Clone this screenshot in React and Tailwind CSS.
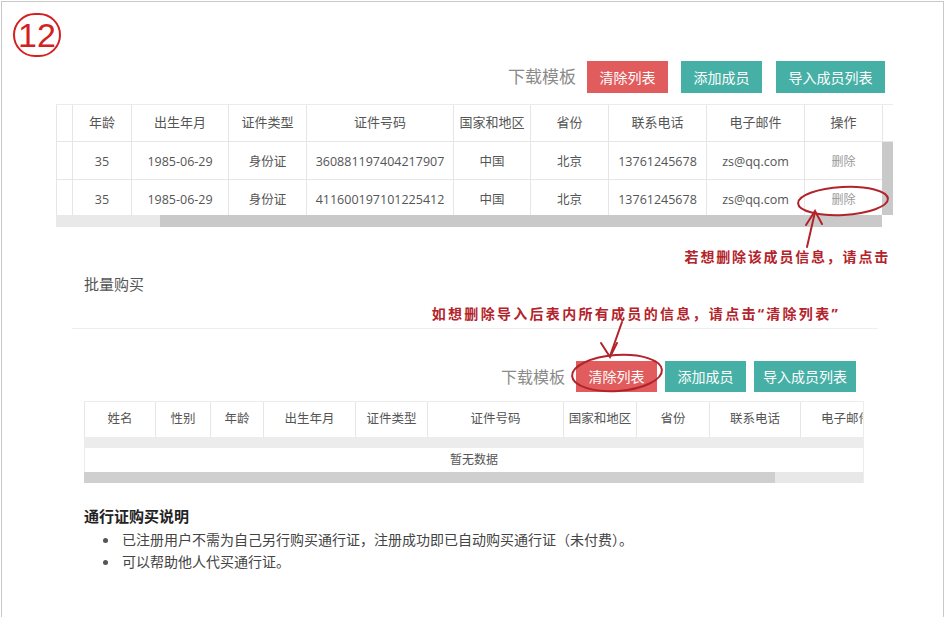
import React from "react";

const font = "font-['Open_Sans','Noto_Sans_CJK_SC',sans-serif]";

const topCols = [
  { w: 16, h: "" },
  { w: 59, h: "年龄" },
  { w: 97, h: "出生年月" },
  { w: 78, h: "证件类型" },
  { w: 147, h: "证件号码" },
  { w: 77, h: "国家和地区" },
  { w: 78, h: "省份" },
  { w: 98, h: "联系电话" },
  { w: 98, h: "电子邮件" },
  { w: 78, h: "操作" },
];

const topRows = [
  ["", "35", "1985-06-29", "身份证", "360881197404217907", "中国", "北京", "13761245678", "zs@qq.com", "删除"],
  ["", "35", "1985-06-29", "身份证", "411600197101225412", "中国", "北京", "13761245678", "zs@qq.com", "删除"],
];

const bottomCols = [
  { w: 71, h: "姓名" },
  { w: 55, h: "性别" },
  { w: 53, h: "年龄" },
  { w: 92, h: "出生年月" },
  { w: 72, h: "证件类型" },
  { w: 136, h: "证件号码" },
  { w: 73, h: "国家和地区" },
  { w: 73, h: "省份" },
  { w: 91, h: "联系电话" },
  { w: 91, h: "电子邮件" },
];

function Buttons({ big }) {
  return (
    <div className="flex items-center">
      <span className={`${big ? "text-[17px]" : "text-[16px]"} text-[#8a8a8a] mr-[11px]`}>下载模板</span>
      <button className={`bg-[#e15c5c] text-white text-[14px] w-[81px] ${big ? "h-[32px]" : "h-[31px]"}`}>清除列表</button>
      <button className={`bg-[#47b0a6] text-white text-[14px] w-[81px] ${big ? "h-[32px] ml-[13px]" : "h-[31px] ml-[8px]"}`}>添加成员</button>
      <button className={`bg-[#47b0a6] text-white text-[14px] ${big ? "w-[109px] h-[32px] ml-[14px]" : "w-[102px] h-[31px] ml-[8px]"}`}>导入成员列表</button>
    </div>
  );
}

function TopTable() {
  return (
    <div className="mt-[11px] w-[837px] border-t border-[#ececec] text-[#555]">
      <div className="flex h-[37px]">
        {topCols.map((c, i) => (
          <div
            key={i}
            style={{ width: c.w }}
            className="flex items-center justify-center border-l border-b border-[#e6e6e6] text-[13px]"
          >
            {c.h}
          </div>
        ))}
        <div className="w-[11px] border-l border-b border-[#e6e6e6]" />
      </div>
      {topRows.map((r, ri) => (
        <div key={ri} className={`flex ${ri === 0 ? "h-[38px]" : "h-[35px]"}`}>
          {r.map((v, i) => (
            <div
              key={i}
              style={{ width: topCols[i].w }}
              className={`flex justify-center border-l border-[#e6e6e6] leading-[20px] ${
                ri === 0 ? "border-b pt-[10px]" : "pt-[10px]"
              } ${i === 9 ? "text-[12px] text-[#9a9a9a]" : "text-[12.5px]"}`}
            >
              {v}
            </div>
          ))}
          <div className="w-[11px] bg-[#c9c9c9]" />
        </div>
      ))}
      <div className="flex h-[12px]">
        <div className="w-[104px] bg-[#e9e9e9]" />
        <div className="w-[722px] bg-[#c9c9c9]" />
        <div className="w-[11px] bg-white" />
      </div>
    </div>
  );
}

function BottomTable() {
  return (
    <div className="mt-[9px] w-[780px] overflow-hidden border-t border-r border-[#ececec] text-[#555]">
      <div className="flex h-[35px] w-max">
        {bottomCols.map((c, i) => (
          <div
            key={i}
            style={{ width: c.w }}
            className="flex items-center justify-center border-l border-[#e6e6e6] text-[12.5px] shrink-0"
          >
            {c.h}
          </div>
        ))}
      </div>
      <div className="h-[11px] bg-[#ececec]" />
      <div className="h-[24px] flex items-center justify-center text-[12px] text-[#555] border-l border-[#ececec]">暂无数据</div>
      <div className="flex h-[11px]">
        <div className="w-[691px] bg-[#cfcfcf]" />
        <div className="flex-1 bg-[#e8e8e8]" />
      </div>
    </div>
  );
}

export default function App() {
  return (
    <div className={`w-[947px] h-[617px] bg-white overflow-hidden ${font}`}>
      <div className="relative ml-[1px] mt-[1px] w-[943px] h-[616px] border border-b-0 border-[#c9c9c9]">
        {/* circled number */}
        <div className="ml-[11px] mt-[11px] w-[48px] h-[44px] rounded-full border-2 border-[#d42020] flex items-center justify-center text-[#d42020] text-[34px] leading-none font-['Liberation_Sans',sans-serif]">
          12
        </div>

        {/* top section */}
        <div className="ml-[54px] mt-[4px] w-[837px]">
          <div className="flex justify-end pr-[8px]">
            <Buttons big />
          </div>
          <TopTable />
        </div>

        <div className="mt-[20px] flex justify-end pr-[53px]">
          <span className="text-[14px] leading-[20px] font-bold tracking-[1.8px] text-[#b3232b]">若想删除该成员信息，请点击</span>
        </div>

        <div className="ml-[82px] mt-[7px] text-[15px] leading-[20px] text-[#555]">批量购买</div>

        <div className="mt-[10px] flex justify-end pr-[103px]">
          <span className="text-[14px] leading-[20px] font-bold tracking-[2.3px] text-[#b3232b]">
            如想删除导入后表内所有成员的信息，请点击“清除列表”
          </span>
        </div>

        <div className="ml-[70px] mt-[4px] w-[806px] h-px bg-[#eeeeee]" />

        {/* bottom section */}
        <div className="mt-[32px] flex justify-end pr-[87px]">
          <Buttons />
        </div>
        <div className="ml-[82px]">
          <BottomTable />
        </div>

        <div className="ml-[82px] mt-[22px] text-[15px] leading-[22px] font-bold text-[#222]">通行证购买说明</div>
        <ul className="ml-[82px] mt-[2px] text-[14px] leading-[22px] text-[#444]">
          <li className="flex items-center">
            <span className="w-[38px] pl-[19px] flex">
              <span className="w-[5px] h-[5px] rounded-full bg-[#555]" />
            </span>
            已注册用户不需为自己另行购买通行证，注册成功即已自动购买通行证（未付费）。
          </li>
          <li className="flex items-center">
            <span className="w-[38px] pl-[19px] flex">
              <span className="w-[5px] h-[5px] rounded-full bg-[#555]" />
            </span>
            可以帮助他人代买通行证。
          </li>
        </ul>

        {/* annotations overlay */}
        <svg className="absolute left-[-2px] top-[-2px] pointer-events-none" width="947" height="617">
          <g fill="none" stroke="#b3232b" strokeWidth="2" strokeLinecap="round">
            <ellipse cx="843" cy="201" rx="45" ry="14" transform="rotate(-3 843 201)" />
            <path d="M807 247 L815 212" />
            <path d="M806 225 L815 211 L822 224" />
            <ellipse cx="617" cy="373" rx="45" ry="18" transform="rotate(-4 617 373)" />
            <path d="M622 322 L610 356" />
            <path d="M601 343 L610 357 L617 343" />
          </g>
        </svg>
      </div>
    </div>
  );
}
